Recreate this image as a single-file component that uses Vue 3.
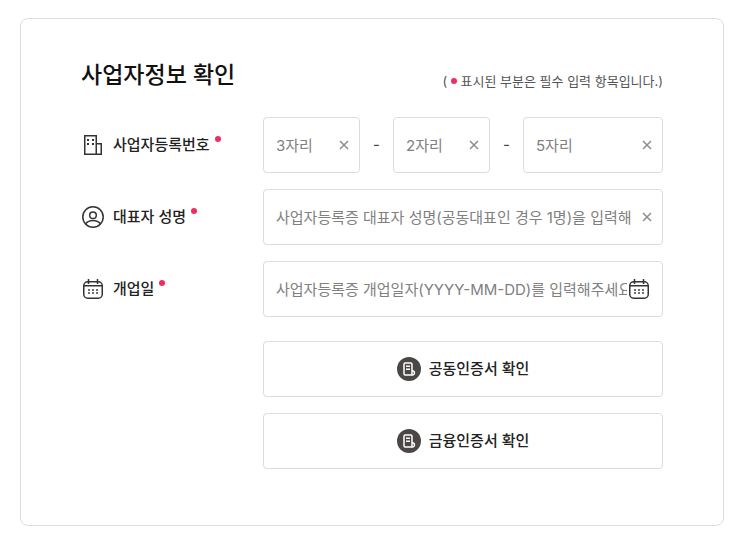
<script setup>
import { ref } from 'vue'

const reg1 = ref('')
const reg2 = ref('')
const reg3 = ref('')
const owner = ref('')
const openDate = ref('')
const certs = ['공동인증서 확인', '금융인증서 확인']
</script>

<template>
  <main class="card">
    <header class="head">
      <h1 class="title">사업자정보 확인</h1>
      <p class="note">( <i class="dot"></i> 표시된 부분은 필수 입력 항목입니다.)</p>
    </header>

    <form class="form" @submit.prevent>
      <div class="row">
        <label class="label" for="reg1">
          <svg class="icon" viewBox="0 0 24 24" aria-hidden="true">
            <path d="M3.750 2.750h11.500v18.500H3.750zM15.250 10.750h5v10.500h-5" />
            <path class="solid" d="M6 6h2v2H6zM11 6h2v2h-2zM6 10h2v2H6zM11 10h2v2h-2z" />
          </svg>
          <span>사업자등록번호</span><i class="dot"></i>
        </label>
        <div class="parts">
          <div class="field">
            <input id="reg1" v-model="reg1" type="text" maxlength="3" placeholder="3자리" />
            <button class="clear" type="button" aria-label="지우기" @click="reg1 = ''">
              <svg viewBox="0 0 10 10"><path d="M1 1l8 8M9 1l-8 8" /></svg>
            </button>
          </div>
          <span class="dash">-</span>
          <div class="field">
            <input v-model="reg2" type="text" maxlength="2" placeholder="2자리" aria-label="사업자등록번호 2자리" />
            <button class="clear" type="button" aria-label="지우기" @click="reg2 = ''">
              <svg viewBox="0 0 10 10"><path d="M1 1l8 8M9 1l-8 8" /></svg>
            </button>
          </div>
          <span class="dash">-</span>
          <div class="field">
            <input v-model="reg3" type="text" maxlength="5" placeholder="5자리" aria-label="사업자등록번호 5자리" />
            <button class="clear" type="button" aria-label="지우기" @click="reg3 = ''">
              <svg viewBox="0 0 10 10"><path d="M1 1l8 8M9 1l-8 8" /></svg>
            </button>
          </div>
        </div>
      </div>

      <div class="row">
        <label class="label" for="owner">
          <svg class="icon" viewBox="0 0 24 24" aria-hidden="true">
            <circle cx="12" cy="12" r="10.200" />
            <circle cx="12" cy="10.200" r="3.300" />
            <path d="M4.500 19c1.700-2.200 4.400-3.400 7.500-3.400s5.800 1.200 7.500 3.400" />
          </svg>
          <span>대표자 성명</span><i class="dot"></i>
        </label>
        <div class="field">
          <input id="owner" v-model="owner" type="text" placeholder="사업자등록증 대표자 성명(공동대표인 경우 1명)을 입력해주세요" />
          <button class="clear" type="button" aria-label="지우기" @click="owner = ''">
            <svg viewBox="0 0 10 10"><path d="M1 1l8 8M9 1l-8 8" /></svg>
          </button>
        </div>
      </div>

      <div class="row">
        <label class="label" for="open-date">
          <svg class="icon" viewBox="0 0 24 24" aria-hidden="true">
            <rect x="2.750" y="4.750" width="18.500" height="16.500" rx="4" />
            <path d="M3 8.750h18M7.500 2v5M16.500 2v5" />
            <path class="solid" d="M7 12h2v2H7zM11 12h2v2h-2zM15 12h2v2h-2zM7 15h2v2H7zM11 15h2v2h-2zM15 15h2v2h-2z" opacity=".7" />
          </svg>
          <span>개업일</span><i class="dot"></i>
        </label>
        <div class="field">
          <input id="open-date" v-model="openDate" type="text" placeholder="사업자등록증 개업일자(YYYY-MM-DD)를 입력해주세요" />
          <button class="pick" type="button" aria-label="날짜 선택">
            <svg class="icon" viewBox="0 0 24 24" aria-hidden="true">
              <rect x="2.750" y="4.750" width="18.500" height="16.500" rx="4" />
              <path d="M3 8.750h18M7.500 2v5M16.500 2v5" />
              <path class="solid" d="M7 12h2v2H7zM11 12h2v2h-2zM15 12h2v2h-2zM7 15h2v2H7zM11 15h2v2h-2zM15 15h2v2h-2z" opacity=".7" />
            </svg>
          </button>
        </div>
      </div>

      <div class="certs">
        <button v-for="cert in certs" :key="cert" class="cert" type="button">
          <svg class="badge" viewBox="0 0 24 24" aria-hidden="true">
            <circle cx="12" cy="12" r="12" />
            <path d="M15 11.500V7.200Q15 6 13.800 6H8.200Q7 6 7 7.200v9.600Q7 18 8.200 18H16M9 9.200h4M9 12.200h4M15 11.500v6.500" />
            <path d="M15 13.700h.8a2.200 2.200 0 0 1 0 4.300" />
          </svg>
          <span>{{ cert }}</span>
        </button>
      </div>
    </form>
  </main>
</template>

<style>
body {
  margin: 0;
  background: #fff;
}
</style>

<style scoped>
.card {
  margin: 18px 14px 14px 20px;
  padding: 40px 60px 56px;
  border: 1px solid #dcdcdc;
  border-radius: 8px;
  color: #222;
  font-family: Inter, "Noto Sans CJK KR", sans-serif;
  font-size: 15px;
  line-height: 24px;
}
input,
button {
  font: inherit;
  color: inherit;
}
.head {
  display: flex;
  justify-content: space-between;
  align-items: flex-end;
  margin-bottom: 24px;
}
.title {
  margin: 0;
  font-size: 23px;
  font-weight: 500;
  line-height: 32px;
  padding-bottom: 2px;
  color: #111;
}
.note {
  margin: 0;
  font-size: 13px;
  font-weight: 400;
  color: #555;
}
.dot {
  display: inline-block;
  width: 6px;
  height: 6px;
  border-radius: 50%;
  background: #f02d62;
}
.note .dot {
  vertical-align: 2px;
}
.form {
  display: flex;
  flex-direction: column;
  gap: 16px;
}
.row {
  display: grid;
  grid-template-columns: 182px minmax(0, 1fr);
  align-items: center;
}
.label {
  display: flex;
  align-items: center;
  font-weight: 500;
}
.label .icon {
  margin-right: 8px;
}
.label .dot {
  align-self: flex-start;
  margin: 3px 0 0 5px;
}
.icon {
  display: block;
  width: 24px;
  height: 24px;
  fill: none;
  stroke: #333;
  stroke-width: 1.5;
}
.icon .solid {
  fill: #333;
  stroke: none;
}
.parts {
  display: grid;
  grid-template-columns: minmax(0, 97fr) 33px minmax(0, 97fr) 33px minmax(0, 140fr);
  align-items: center;
}
.dash {
  text-align: center;
  color: #444;
}
.field {
  box-sizing: border-box;
  display: flex;
  align-items: center;
  min-width: 0;
  height: 56px;
  padding: 0 10px 0 12px;
  border: 1px solid #dcdcdc;
  border-radius: 4px;
}
.field input {
  flex: 1;
  width: 0;
  min-width: 0;
  padding: 2px 0 0;
  border: 0;
  outline: 0;
  background: none;
  font-weight: 400;
}
.field input::placeholder {
  color: #808080;
  opacity: 1;
}
.clear,
.pick {
  flex: none;
  padding: 0;
  border: 0;
  background: none;
  cursor: pointer;
}
.pick {
  margin-right: 1px;
}
.clear svg {
  display: block;
  width: 10px;
  height: 10px;
  margin-left: 10px;
  fill: none;
  stroke: #8c8c8c;
  stroke-width: 1.5;
}
.certs {
  display: flex;
  flex-direction: column;
  gap: 16px;
  margin: 8px 0 0 182px;
}
.cert {
  display: flex;
  align-items: center;
  justify-content: center;
  gap: 8px;
  height: 56px;
  border: 1px solid #dcdcdc;
  border-radius: 4px;
  background: #fff;
  font-weight: 500;
  cursor: pointer;
}
.badge {
  width: 24px;
  height: 24px;
  fill: none;
  stroke: #fff;
  stroke-width: 1.5;
}
.badge circle {
  fill: #4c4747;
  stroke: none;
}
</style>
